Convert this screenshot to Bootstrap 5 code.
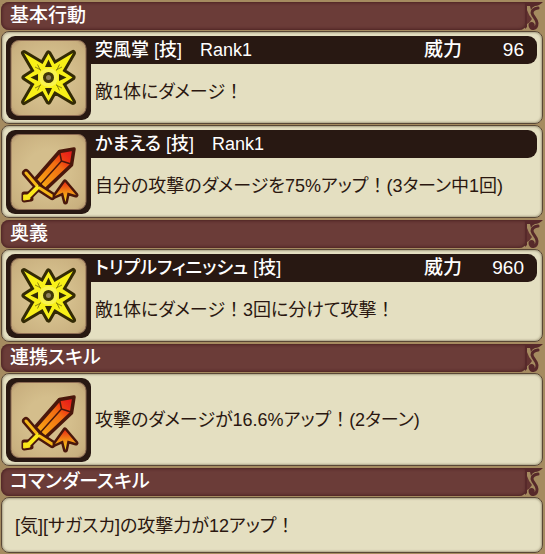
<!DOCTYPE html>
<html lang="ja">
<head>
<meta charset="utf-8">
<meta name="viewport" content="width=device-width, initial-scale=1">
<title>スキル</title>
<link href="https://cdn.jsdelivr.net/npm/bootstrap@5.3.0/dist/css/bootstrap.min.css" rel="stylesheet">
<style>
body{background:#a58b60;color:#2a1710;font:18px/28px "Liberation Sans","Noto Sans CJK JP",sans-serif;font-feature-settings:"palt";padding:2px 2px 1px 1px}
.skill-group{padding-bottom:1px}
.ribbon{height:28px;margin-bottom:1px;color:#fff}
.ribbon h2{font-size:19px;line-height:28px;font-weight:500;margin:0;padding-left:9px;background:#6b3c38;border-radius:8px 0 8px 8px;box-shadow:inset 0 0 3px 1px #4c2223}
.ribbon svg{width:18px;height:28px;margin-left:-2px;flex:none}
.panel{min-height:93px;margin-bottom:1px;padding:4px 5px 3px 4px;background:#e4dfc1;border:1px solid #594736;border-radius:8px;box-shadow:inset 0 0 2px 1px #a9a184}
.panel-text{min-height:56px;padding-left:13px}
.emblem{width:85px;height:84px;position:relative;flex:none}
.bar{height:28px;margin-left:-12px;padding:0 13px 0 16px;background:#281812;color:#fff;font-weight:500;border-radius:0 9px 9px 0;white-space:pre}
.power{width:100px;font-size:19px}
.desc{padding-left:4px}
.full{font-feature-settings:normal}
</style>
<script src="https://cdn.jsdelivr.net/npm/bootstrap@5.3.0/dist/js/bootstrap.bundle.min.js"></script>
</head>
<body>
<svg width="0" height="0" class="position-absolute" aria-hidden="true">
<defs>
<linearGradient id="blade" gradientUnits="userSpaceOnUse" x1="66" y1="20" x2="30" y2="58"><stop offset="0" stop-color="#e5151d"/><stop offset=".25" stop-color="#ee3b12"/><stop offset=".4" stop-color="#f26d12"/><stop offset=".8" stop-color="#f79a14"/><stop offset="1" stop-color="#fbc818"/></linearGradient>
<linearGradient id="arrow" x1="0" y1="0" x2="0" y2="1"><stop offset="0" stop-color="#e92d13"/><stop offset=".5" stop-color="#f28a15"/><stop offset="1" stop-color="#fbdc19"/></linearGradient>
<radialGradient id="parch" r=".75"><stop offset=".4" stop-color="#d4be8c"/><stop offset=".8" stop-color="#c9b07f"/><stop offset="1" stop-color="#a28161"/></radialGradient>
<symbol id="frame" viewBox="0 0 85 84"><rect width="85" height="84" rx="9" fill="#281812"/><rect x="5" y="4.500" width="75" height="75" rx="8" fill="url(#parch)" stroke="#8c6b52"/></symbol>
<symbol id="star" viewBox="0 0 85 84"><use href="#frame"/>
<path d="M18 17L36.500 28L42.500 17.500L48.500 28L67 17L56.500 35L66.500 41.500L56.500 48L67 66L48.500 55L42.500 65.500L36.500 55L18 66L28.500 48L18.500 41.500L28.500 35Z" fill="#f8f018" stroke="#332a05" stroke-width="6" stroke-linejoin="round" paint-order="stroke"/>
<path d="M42.500 23.500L46 31H39ZM42.500 59.500L46 52H39ZM24.500 41.500L32 38V45ZM60.500 41.500L53 38V45Z" fill="#332a05"/>
<path d="M29 31L35 34M31.500 28.500L34.500 34.500M56 31L50 34M53.500 28.500L50.500 34.500M29 52L35 49M31.500 54.500L34.500 48.500M56 52L50 49M53.500 54.500L50.500 48.500" stroke="#8d8510"/>
<circle cx="42.500" cy="41.500" r="7.500" fill="#403708" stroke="#f9f34e" stroke-width="4"/><circle cx="42.500" cy="41.500" r="2.500" fill="#8f805c"/></symbol>
<symbol id="sword" viewBox="0 0 85 84"><use href="#frame"/>
<g fill="none" stroke="#4a170b" stroke-linejoin="round" stroke-linecap="round">
<path d="M68 19L65.500 35L39 60L29 49.500L53.500 21.500Z" fill="url(#blade)" stroke-width="3.500"/>
<path d="M20 43L32 57L46 66M32 57L22 67" stroke-width="8"/>
<path d="M18 64L24 64L25 69L18 70Z" fill="#f8e71b" stroke-width="5"/>
<path d="M20 43L32 57L46 66" stroke="#f6b719" stroke-width="3"/>
<path d="M32 57L22 67" stroke="#fae71a" stroke-width="4"/>
<path d="M18 65L23 65L24 69L18 70Z" fill="#fae71a" stroke="#fae71a" stroke-width="1"/>
<path d="M53.500 21.500L55.500 31L65 34M55.500 31L33 56" stroke-width="1.500"/>
<path d="M59 52L70 65L61.500 62.500L59.500 72L57 62.500L49 66Z" fill="url(#arrow)" stroke-width="5" paint-order="stroke"/></g></symbol>
<symbol id="flourish" viewBox="0 0 18 28"><path d="M0 0H18Q14 4 10 4Q7 5 6 8L5 4L2 4V25L0 27Z" fill="#57292a"/><path d="M13 6Q7 7 7 11C8 15 12 17 12 21C12 28 5 28 5 23C6 20 9 22 8 24" fill="none" stroke="#57292a" stroke-width="3" stroke-linecap="round"/><path d="M2 8Q4 14 7 17L4 21L2 22Z" fill="#633331"/></symbol>
</defs>
</svg>
<main>
<section class="skill-group">
<div class="ribbon d-flex"><h2 class="flex-grow-1">基本行動</h2><svg aria-hidden="true"><use href="#flourish"/></svg></div>
<article class="panel d-flex"><svg class="emblem" aria-hidden="true"><use href="#star"/></svg>
<div class="flex-grow-1 d-flex flex-column"><div class="bar d-flex justify-content-between"><span>突風掌 [技]　Rank1</span><span class="power d-flex justify-content-between"><span>威力</span><span>96</span></span></div><div class="desc flex-grow-1 d-flex align-items-center"><span>敵1体にダメージ<span class="full">！</span></span></div></div></article>
<article class="panel d-flex"><svg class="emblem" aria-hidden="true"><use href="#sword"/></svg>
<div class="flex-grow-1 d-flex flex-column"><div class="bar">かまえる [技]　Rank1</div><div class="desc flex-grow-1 d-flex align-items-center"><span>自分の攻撃のダメージを75%アップ<span class="full">！</span>(3ターン中1回)</span></div></div></article>
</section>
<section class="skill-group">
<div class="ribbon d-flex"><h2 class="flex-grow-1">奥義</h2><svg aria-hidden="true"><use href="#flourish"/></svg></div>
<article class="panel d-flex"><svg class="emblem" aria-hidden="true"><use href="#star"/></svg>
<div class="flex-grow-1 d-flex flex-column"><div class="bar d-flex justify-content-between"><span>トリプルフィニッシュ [技]</span><span class="power d-flex justify-content-between"><span>威力</span><span>960</span></span></div><div class="desc flex-grow-1 d-flex align-items-center"><span>敵1体にダメージ<span class="full">！</span>3回に分けて攻撃<span class="full">！</span></span></div></div></article>
</section>
<section class="skill-group">
<div class="ribbon d-flex"><h2 class="flex-grow-1">連携スキル</h2><svg aria-hidden="true"><use href="#flourish"/></svg></div>
<article class="panel d-flex"><svg class="emblem" aria-hidden="true"><use href="#sword"/></svg><div class="desc d-flex align-items-center"><span>攻撃のダメージが16.6%アップ<span class="full">！</span>(2ターン)</span></div></article>
</section>
<section>
<div class="ribbon d-flex"><h2 class="flex-grow-1">コマンダースキル</h2><svg aria-hidden="true"><use href="#flourish"/></svg></div>
<div class="panel panel-text d-flex align-items-center mb-0"><span>[気][サガスカ]の攻撃力が12アップ<span class="full">！</span></span></div>
</section>
</main>
</body>
</html>
